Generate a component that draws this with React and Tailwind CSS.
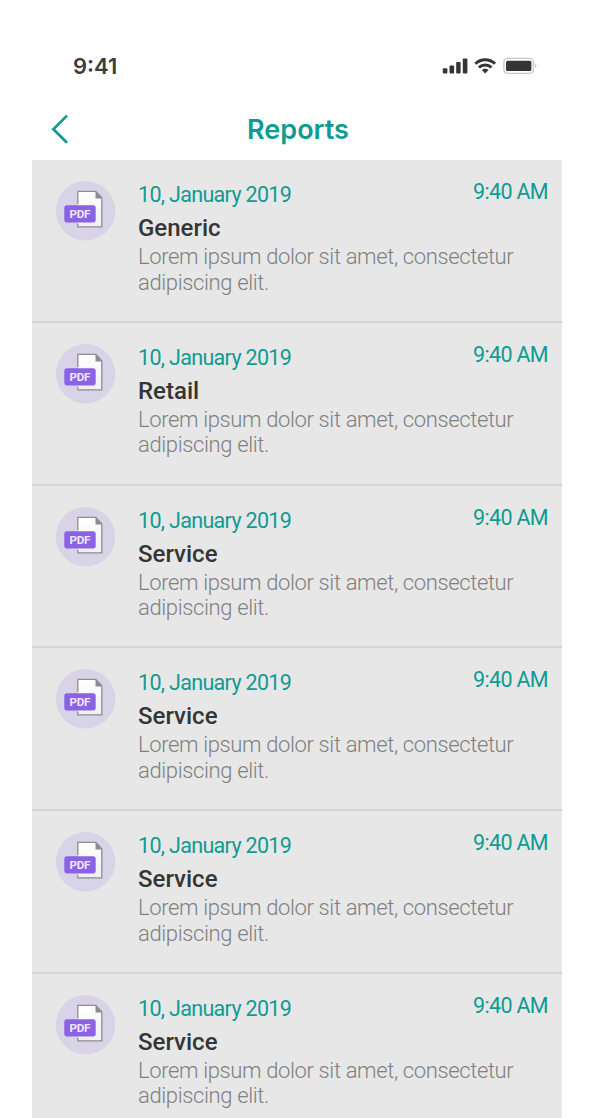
import React from "react";

const reports = [
  { title: "Generic" },
  { title: "Retail" },
  { title: "Service" },
  { title: "Service" },
  { title: "Service" },
  { title: "Service" },
].map((report) => ({
  ...report,
  date: "10, January 2019",
  time: "9:40 AM",
  body: ["Lorem ipsum dolor sit amet, consectetur", "adipiscing elit."],
}));

function StatusIcons() {
  return (
    <svg className="mt-[2px] h-[24px] w-[100px]" viewBox="0 0 100 24" fill="none">
      <g fill="#353535">
        <rect x="2.8" y="13.2" width="4.6" height="5.4" rx="1" />
        <rect x="9.5" y="10.4" width="4.6" height="8.2" rx="1" />
        <rect x="16.2" y="7" width="4.4" height="11.6" rx="1" />
        <rect x="22.8" y="3.4" width="4.6" height="15.2" rx="1" />
      </g>
      <g stroke="#353535" strokeWidth="2.9">
        <path d="M35.4 8.8 A14 14 0 0 1 55 8.8" />
        <path d="M38.9 12.5 A9 9 0 0 1 51.5 12.5" />
      </g>
      <path d="M45.2 18.4 L41.8 15 A5 5 0 0 1 48.6 15 Z" fill="#353535" />
      <rect x="63.9" y="3.4" width="29.6" height="15" rx="3.8" stroke="#c8c8c8" strokeWidth="1.4" />
      <rect x="66" y="5.7" width="25.4" height="10.4" rx="1.6" fill="#353535" />
      <path d="M95.3 8.5 A3.6 3.6 0 0 1 95.3 13.3 Z" fill="#b5b5b5" />
    </svg>
  );
}

function PdfIcon() {
  return (
    <svg className="h-[60px] w-[60px] shrink-0" viewBox="0 0 60 60">
      <defs>
        <linearGradient id="paper" x1="0" y1="0" x2="0" y2="1">
          <stop offset="0" stopColor="#ffffff" />
          <stop offset="1" stopColor="#f0f0f1" />
        </linearGradient>
      </defs>
      <circle cx="29.6" cy="29.8" r="29.7" fill="#d8d3e7" />
      <path d="M21.8 10.4 H39.8 L45.8 16.8 V45.8 H21.8 Z" fill="url(#paper)" stroke="#8e8c93" strokeWidth="1.3" />
      <path d="M39.5 10.4 L46.2 17.6 H39.5 Z" fill="#8e8c93" />
      <rect x="19" y="23" width="4" height="19.6" fill="#d8d3e7" />
      <rect x="22.3" y="23" width="1" height="19.6" fill="#f7f7f8" />
      <rect x="8.3" y="24.2" width="31.4" height="17.2" rx="2.6" fill="#8a63e3" />
      <text x="23.9" y="37" textAnchor="middle" fill="#efe8ff" fontSize="11.6" fontWeight="700" fontFamily="Roboto, sans-serif" textLength="20.8">
        PDF
      </text>
    </svg>
  );
}

function ReportRow({ report }) {
  return (
    <li className="flex h-[162.75px] shrink-0 border-b-2 border-[#d5d5d5] pt-[21px] pr-[14px] pl-6">
      <PdfIcon />
      <div className="ml-[22px] min-w-0 flex-1 whitespace-nowrap">
        <div className="flex justify-between pt-px text-[21.5px] leading-[26px] text-[#0f9b94]">
          <span className="tracking-[-0.68px]">{report.date}</span>
          <span className="-mt-[3px] tracking-[-0.65px]">{report.time}</span>
        </div>
        <h2 className="mt-[6px] text-[24px] leading-[28px] font-medium text-[#353535]">{report.title}</h2>
        <p className="mt-[2px] text-[22px] leading-[25.5px] font-light tracking-[-0.37px] text-[#808080]">
          {report.body[0]}
          <br />
          {report.body[1]}
        </p>
      </div>
    </li>
  );
}

export default function App() {
  return (
    <div className="flex h-[1118px] flex-col overflow-hidden bg-white px-8 font-['Roboto',sans-serif]">
      <div className="flex h-[100px] shrink-0 items-start justify-between pt-[53px] pr-[22px] pl-[41px]">
        <span className="font-['Inter',sans-serif] text-[22px] leading-[26px] font-semibold text-[#3c3c3c]">9:41</span>
        <StatusIcons />
      </div>
      <header className="grid h-[60px] shrink-0 grid-cols-[60px_1fr_60px] items-center">
        <svg className="ml-[18px] h-[32px] w-[20px]" viewBox="0 0 20 32" fill="none" stroke="#0f9b94" strokeWidth="2.7">
          <path d="M17 1.6 L3.4 15.2 L17 28.8" />
        </svg>
        <h1 className="pl-[2px] text-center font-['Inter',sans-serif] text-[27px] leading-[32px] font-semibold text-[#0f9b94]">Reports</h1>
      </header>
      <ul className="flex flex-col bg-[#e7e7e7]">
        {reports.map((report, index) => (
          <ReportRow key={index} report={report} />
        ))}
      </ul>
    </div>
  );
}
